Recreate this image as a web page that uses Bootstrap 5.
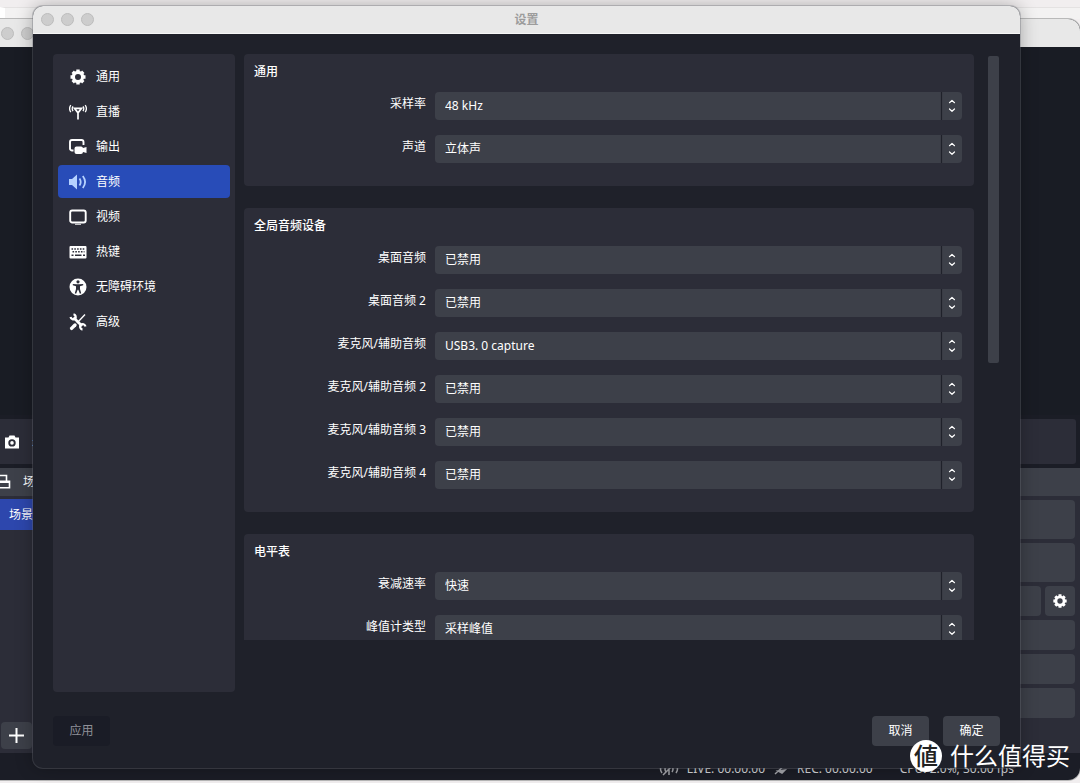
<!DOCTYPE html>
<html lang="zh-CN">
<head>
<meta charset="utf-8">
<meta name="viewport" content="width=device-width, initial-scale=1">
<title>设置</title>
<link href="https://cdn.jsdelivr.net/npm/bootstrap@5.3.0/dist/css/bootstrap.min.css" rel="stylesheet">
<style>
:root { --panel:#2c2d38; --field:#3d4049; --base:#1f212a; }
body { font-family:"Noto Sans","Noto Sans CJK SC",sans-serif; font-size:12px; line-height:18px; color:#fff; background:#f1eeef; }
.desktop { min-height:100vh; overflow:hidden; }
.tabstrip { height:19px; padding-top:7px; }
.tabstrip div { height:12px; background:#f3f2f2; border-top:1px solid #e4e2e2; border-left:5px solid #fff; }
.backwin { top:19px; left:-12px; right:0; bottom:3px; background:#1b1d26; border-radius:12px; box-shadow:0 0 0 1px #b9b9b9; overflow:hidden; }
.titlebar { height:28px; background:#e8e8e8; flex:none; }
.backwin .titlebar { padding-left:13px; gap:7px; }
.dot { width:13px; height:13px; border-radius:50%; background:#cdcdcd; border:1px solid #bcbcbc; }
.preview { background:#191c24; }
.toolstrip { height:45px; background:var(--panel); margin:4px 4px 4px 0; border-radius:3px; }
.docks { height:285px; }
.dock { width:180px; background:var(--panel); }
.dockhead { height:28px; background:var(--field); padding-left:12px; }
.scene { height:31px; background:#2d47ad; margin-top:3px; padding-left:21px; }
.addbtn { width:31px; height:27px; margin:0 0 4px 13px; }
.flatbtn { background:var(--field); color:#fff; border:0; border-radius:4px; padding:0; font-size:12px; line-height:18px; }
.flatbtn:hover { background:#4a4d58; color:#fff; }
.addbtn, .square { display:flex; align-items:center; justify-content:center; }
.controls { gap:4px; padding:4px 5px 0 0; }
.tall { height:39px; }
.short { height:30px; }
.square { width:30px; }
.status { height:27px; padding:7px 66px 0 0; color:#d5d6d9; }
.status .cpu { margin-left:27px; }
.dialogwin { top:6px; left:33px; right:60px; bottom:15px; background:var(--base); border-radius:10px; overflow:hidden; box-shadow:0 0 0 1px rgba(110,112,120,.35), 0 0 18px rgba(0,0,0,.3); }
.dialogwin .titlebar { color:#9c9c9c; font-weight:700; border-bottom:1px solid #f6f6f6; }
.titlebar .lights { left:8px; top:7px; gap:7px; }
.bodyrow { padding:20px 20px 0 20px; min-height:0; }
.side { width:182px; background:var(--panel); border-radius:4px; padding:6px 5px; gap:2px; margin-right:9px; flex:none; }
.side .nav-link { height:33px; padding:0 10px; gap:9px; color:#fff; font-size:12px; border-radius:4px; border-left:1px solid transparent; }
.side .nav-link.active { background:#284cb8; }
.side svg { width:18px; height:18px; flex:none; }
.scroller { margin-bottom:52px; overflow:hidden; min-width:0; }
.group { background:var(--panel); border-radius:4px; padding:9px 12px 23px 10px; margin-bottom:22px; }
.group h2 { font-size:12px; line-height:18px; font-weight:500; margin-bottom:11px; }
.fields { display:grid; grid-template-columns:172px 1fr; column-gap:9px; row-gap:15px; }
.fields label { text-align:right; line-height:18px; padding-top:3px; }
.fields .form-select { height:28px; padding:0 32px 0 10px; font-size:12px; line-height:18px; color:#fff; border:0; border-radius:4px; background-color:var(--field);
 background-image:url("data:image/svg+xml,%3Csvg xmlns='http://www.w3.org/2000/svg' width='22' height='28'%3E%3Cpath d='M1.500 0V28' stroke='%231f212a' stroke-width='1.2'/%3E%3Cpath d='M9.500 10.700 12 8.400 14.500 10.700M9.500 17 12 19.300 14.500 17' fill='none' stroke='white' stroke-width='1.2' stroke-linecap='round' stroke-linejoin='round'/%3E%3C/svg%3E");
 background-position:right 0 center; background-size:22px 28px; }
.thumb { width:11px; height:307px; margin:2px 1px 0 14px; background:var(--field); border-radius:2px; flex:none; }
.actions { padding:24px 20px 22px; gap:14px; }
.actions .btn { min-width:57px; height:30px; }
.actions .btn:disabled { background:#1a1c26; color:#8f9098; opacity:1; border:0; }
.watermark { right:10px; bottom:10px; gap:8px; font-size:24px; line-height:34px; pointer-events:none; }
.watermark .seal { width:32px; height:32px; border-radius:50%; background:#fff; color:#222; line-height:32px; font-weight:500; text-align:center; }
</style>
</head>
<body>
<svg class="d-none" xmlns="http://www.w3.org/2000/svg">
 <symbol id="gear" viewBox="0 0 18 18"><circle cx="9" cy="9" r="4.600" fill="none" stroke="currentColor" stroke-width="3.200"/><path stroke="currentColor" stroke-width="3.400" d="M9 1.500v2M9 14.500v2M1.500 9h2M14.500 9h2M3.700 3.700l1.400 1.400M12.900 12.900l1.400 1.400M14.300 3.700l-1.400 1.400M5.100 12.900l-1.400 1.400"/></symbol>
</svg>
<div class="desktop position-relative">
 <div class="tabstrip"><div></div></div>
 <section class="backwin position-absolute d-flex flex-column" aria-label="OBS">
  <div class="titlebar d-flex align-items-center"><span class="dot"></span><span class="dot"></span></div>
  <div class="preview flex-grow-1"></div>
  <div class="toolstrip d-flex align-items-center ps-3">
   <svg width="16" height="16" viewBox="0 0 16 16"><path fill="#fff" fill-rule="evenodd" d="M5.500 1.500h5l1 2H15v11H1v-11h3.500zM8 5.200a3.700 3.700 0 1 0 0 7.400a3.700 3.700 0 0 0 0-7.400zm0 1.900a1.800 1.800 0 1 1 0 3.600a1.800 1.800 0 0 1 0-3.600z"/></svg>
   <span class="ms-2 ps-1">未选择源</span>
  </div>
  <div class="docks d-flex justify-content-between">
   <div class="dock d-flex flex-column">
    <div class="dockhead d-flex align-items-center gap-2"><svg width="11" height="18" viewBox="0 0 11 18"><path d="M0 2.500h6.500V8M0 8.300h9.500v6.500H0M0 9.300h9" fill="none" stroke="#fff" stroke-width="1.600"/></svg><span class="ps-1">场景</span></div>
    <div class="scene d-flex align-items-center">场景</div>
    <button class="btn flatbtn addbtn mt-auto" aria-label="添加"><svg width="15" height="15" viewBox="0 0 15 15"><path d="M7.500 0v15M0 7.500h15" stroke="#fff" stroke-width="2"/></svg></button>
   </div>
   <div class="dock">
    <div class="dockhead"></div>
    <div class="controls d-flex flex-column">
     <button class="btn flatbtn tall" aria-label="开始直播"></button>
     <button class="btn flatbtn tall" aria-label="开始录制"></button>
     <div class="d-flex gap-1"><button class="btn flatbtn short flex-grow-1" aria-label="启动虚拟摄像机"></button><button class="btn flatbtn short square" aria-label="配置"><svg width="16" height="16"><use href="#gear"/></svg></button></div>
     <button class="btn flatbtn short" aria-label="工作室模式"></button>
     <button class="btn flatbtn short" aria-label="设置"></button>
     <button class="btn flatbtn short" aria-label="退出"></button>
    </div>
   </div>
  </div>
  <div class="status d-flex justify-content-end">
   <svg class="me-2" width="20" height="18" viewBox="0 0 20 18"><path d="M3 5q-3 4 0 8M7 6q-2 3 0 6M13 6q2 3 0 6M17 5q3 4 0 8M4 15 16 3M10 9v6" fill="none" stroke="#a5a6ac" stroke-width="1.500"/></svg>
   <span>LIVE: 00:00:00</span>
   <svg class="ms-2 me-2" width="16" height="18" viewBox="0 0 16 18"><path d="M2 14 14 3M5 11l7-1-3 3z" fill="#a5a6ac" stroke="#a5a6ac" stroke-width="1.500"/></svg>
   <span>REC: 00:00:00</span>
   <span class="cpu">CPU: 2.0%, 30.00 fps</span>
  </div>
 </section>

 <main class="dialogwin position-absolute d-flex flex-column" role="dialog" aria-labelledby="dlg-title">
  <div class="titlebar position-relative d-flex align-items-center justify-content-center">
   <div class="lights position-absolute d-flex"><span class="dot"></span><span class="dot"></span><span class="dot"></span></div>
   <span id="dlg-title">设置</span>
  </div>
  <div class="bodyrow d-flex flex-grow-1">
   <nav class="side nav flex-column flex-nowrap">
    <a class="nav-link d-flex align-items-center" href="#"><svg viewBox="1 1 16 16"><use href="#gear" x="1" y="1" width="16" height="16"/></svg>通用</a>
    <a class="nav-link d-flex align-items-center" href="#"><svg viewBox="0 0 18 18" fill="none" stroke="currentColor"><path stroke-width="1.700" d="M5.500 5.300h7L9 9.800zM9 9v7.500"/><path stroke-width="1.300" d="M4 3.300q-1.600 2.200 0 4.800M1.800 2.200q-2.400 3.500 0 7M14 3.300q1.600 2.200 0 4.800M16.200 2.200q2.400 3.500 0 7"/></svg>直播</a>
    <a class="nav-link d-flex align-items-center" href="#"><svg viewBox="0 0 18 18"><path fill="none" stroke="currentColor" stroke-width="1.900" d="M4.500 12.500H3a2 2 0 0 1-2-2V4a2 2 0 0 1 2-2h9.500a2 2 0 0 1 2 2v3"/><path fill="currentColor" d="M7.500 8.500h4.500a2 2 0 0 1 2 1.600l3.500-1v6l-3.500-1a2 2 0 0 1-2 1.900H7.500a2 2 0 0 1-2-2v-3.500a2 2 0 0 1 2-2z"/></svg>输出</a>
    <a class="nav-link active d-flex align-items-center" href="#" aria-current="page"><svg viewBox="0 0 18 18"><path fill="#b5d2ff" d="M0 6h3l5-4.500v15L3 12H0z"/><path fill="none" stroke="#b5d2ff" stroke-width="1.800" d="M10.500 5.500q2.400 3.500 0 7M13.800 3q4.600 6 0 12"/></svg>音频</a>
    <a class="nav-link d-flex align-items-center" href="#"><svg viewBox="0 0 18 18"><rect x="1.200" y="2.500" width="15.500" height="12" rx="2" fill="none" stroke="currentColor" stroke-width="1.900"/><path d="M6 16.300h6" stroke="currentColor" stroke-opacity=".7" stroke-width="1.200"/></svg>视频</a>
    <a class="nav-link d-flex align-items-center" href="#"><svg viewBox="0 0 18 18"><rect x="0.500" y="3" width="17" height="12.500" rx="1" fill="currentColor"/><path d="M2.500 6h13.500M3.500 8.800h12" stroke="#2c2d38" stroke-width="1.500" stroke-dasharray="1.600 1.200"/><path d="M2.500 12.200h2M6 12.200h6.500M14 12.200h2" stroke="#2c2d38" stroke-width="1.500"/></svg>热键</a>
    <a class="nav-link d-flex align-items-center" href="#"><svg viewBox="0 0 18 18"><circle cx="9" cy="9" r="8.500" fill="currentColor"/><circle cx="9" cy="3.800" r="1.600" fill="#2c2d38"/><path fill="#2c2d38" d="M3.800 6 7.500 6.300h3L14.200 6v1.300l-3.200 1V11l1.200 4.300-1.300.4L9.300 11.800h-.6L7.100 15.700l-1.300-.4L7 11V8.300l-3.200-1z"/></svg>无障碍环境</a>
    <a class="nav-link d-flex align-items-center" href="#"><svg viewBox="0 0 18 18" fill="none" stroke="currentColor"><path stroke-width="2.600" d="M4.500 4.500 13 13"/><path stroke-width="2.200" d="M1.500 4a3 3 0 0 0 4.800 1.700A3 3 0 0 0 4.500 1.200M16.500 13.500a3 3 0 0 0-4.800-1.700 3 3 0 0 0 1.800 4.800"/><path stroke-width="1.400" d="M8 10l8-8.500"/><path stroke-width="3.400" stroke-linecap="round" d="M2.600 15.400 6 12"/></svg>高级</a>
   </nav>
   <div class="scroller flex-grow-1">
    <section class="group"><h2>通用</h2><div class="fields">
     <label for="rate">采样率</label><select id="rate" class="form-select"><option>48 kHz</option></select>
     <label for="chan">声道</label><select id="chan" class="form-select"><option>立体声</option></select>
    </div></section>
    <section class="group"><h2>全局音频设备</h2><div class="fields">
     <label for="d1">桌面音频</label><select id="d1" class="form-select"><option>已禁用</option></select>
     <label for="d2">桌面音频 2</label><select id="d2" class="form-select"><option>已禁用</option></select>
     <label for="m1">麦克风/辅助音频</label><select id="m1" class="form-select"><option>USB3. 0 capture</option></select>
     <label for="m2">麦克风/辅助音频 2</label><select id="m2" class="form-select"><option>已禁用</option></select>
     <label for="m3">麦克风/辅助音频 3</label><select id="m3" class="form-select"><option>已禁用</option></select>
     <label for="m4">麦克风/辅助音频 4</label><select id="m4" class="form-select"><option>已禁用</option></select>
    </div></section>
    <section class="group"><h2>电平表</h2><div class="fields">
     <label for="decay">衰减速率</label><select id="decay" class="form-select"><option>快速</option></select>
     <label for="peak">峰值计类型</label><select id="peak" class="form-select"><option>采样峰值</option></select>
    </div></section>
   </div>
   <div class="thumb"></div>
  </div>
  <div class="actions d-flex">
   <button class="btn flatbtn me-auto" disabled>应用</button>
   <button class="btn flatbtn">取消</button>
   <button class="btn flatbtn">确定</button>
  </div>
 </main>
 <div class="watermark position-absolute d-flex align-items-center"><span class="seal">値</span><span>什么值得买</span></div>
</div>
<script src="https://cdn.jsdelivr.net/npm/bootstrap@5.3.0/dist/js/bootstrap.bundle.min.js"></script>
</body>
</html>
